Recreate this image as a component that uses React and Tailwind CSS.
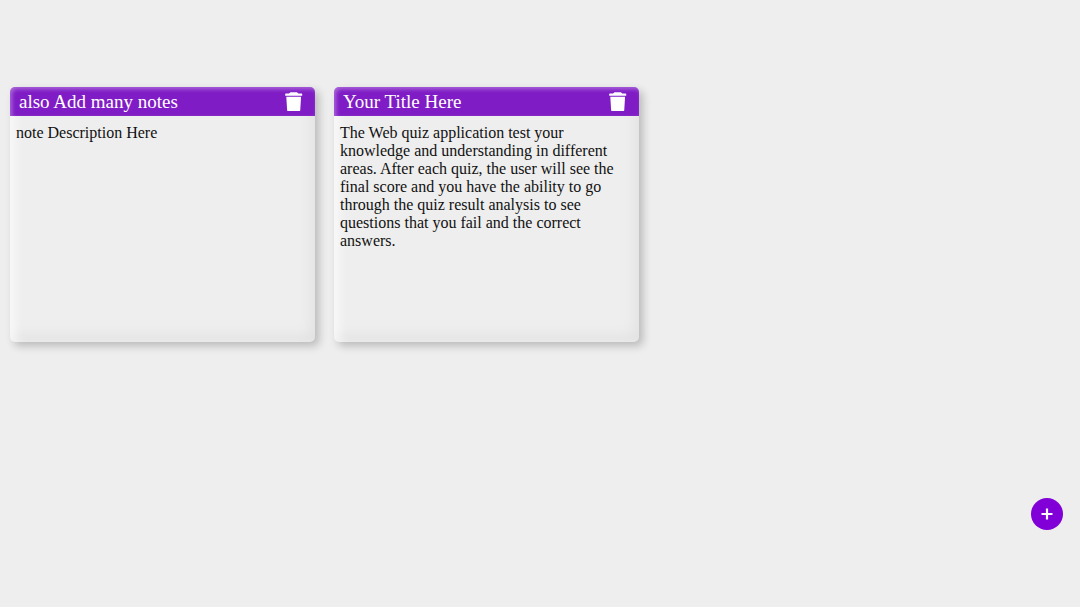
const notes = [
  { id: 1, title: "also Add many notes", body: "note Description Here" },
  {
    id: 2,
    title: "Your Title Here",
    body: "The Web quiz application test your knowledge and understanding in different areas. After each quiz, the user will see the final score and you have the ability to go through the quiz result analysis to see questions that you fail and the correct answers.",
  },
];

function TrashIcon() {
  return (
    <svg viewBox="0 0 18 20" className="h-5 w-[18px]" fill="currentColor" aria-hidden="true">
      <path d="M.2 2.1Q.2 1.5.8 1.5H4L5.5.2H11.9L13.4 1.5H16.6Q17.2 1.5 17.2 2.1V3.7H.2Z" />
      <path d="M1.3 4.7H16.1L15.2 18.4Q15.1 19.1 14.4 19.1H3Q2.3 19.1 2.2 18.4Z" />
    </svg>
  );
}

function Note({ title, body }) {
  return (
    <article className="h-[255px] w-[305px] rounded-[5px] bg-[#eeeeee] shadow-[4px_4px_8px_rgba(0,0,0,0.22),inset_8px_0px_8px_-2px_rgba(255,255,255,0.6),inset_-6px_-8px_14px_-2px_rgba(0,0,0,0.05)]">
      <header className="flex h-[29px] items-center justify-between rounded-t-[5px] bg-[#7f1cc5] pr-3 pl-[9px] text-white shadow-[inset_2px_2px_4px_rgba(255,255,255,0.35)]">
        <h2 className="text-[19px] leading-6">{title}</h2>
        <button type="button" aria-label={`Delete ${title}`} className="cursor-pointer">
          <TrashIcon />
        </button>
      </header>
      <p className="pt-2 pr-5 pl-1.5 text-base leading-[18px] text-[#111111]">{body}</p>
    </article>
  );
}

export default function App() {
  return (
    <div className="min-h-screen bg-[#eeeeee] font-['Liberation_Serif',serif]">
      <main className="flex flex-wrap gap-[19px] px-2.5 pt-[87px]">
        {notes.map((note) => (
          <Note key={note.id} title={note.title} body={note.body} />
        ))}
      </main>
      <button
        type="button"
        aria-label="Add note"
        className="fixed right-[17px] bottom-[77px] flex size-8 cursor-pointer items-center justify-center rounded-full bg-[#8000d7] text-white"
      >
        <svg viewBox="0 0 12 12" className="size-3" fill="none" stroke="currentColor" strokeWidth="2.2" aria-hidden="true">
          <path d="M6 .5v11M.5 6h11" />
        </svg>
      </button>
    </div>
  );
}
